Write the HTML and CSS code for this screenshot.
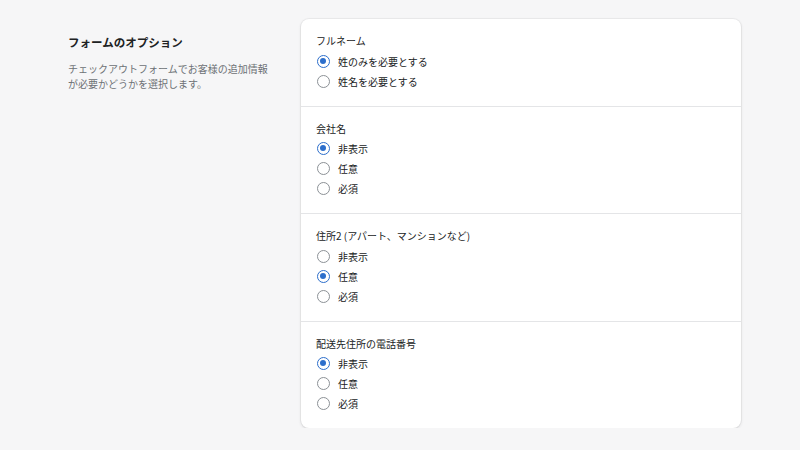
FILE: index.html
```html
<!DOCTYPE html>
<html lang="ja">
<head>
  <meta charset="UTF-8">
  <title>フォームのオプション</title>
  <link rel="stylesheet" href="styles.css">
</head>
<body>
  <div class="layout">
    <div class="intro">
      <h2 class="intro-title">フォームのオプション</h2>
      <p class="intro-text">チェックアウトフォームでお客様の追加情報が必要かどうかを選択します。</p>
    </div>

    <div class="card">
      <div class="section">
        <div class="section-label">フルネーム</div>
        <label class="option"><span class="radio checked"></span>姓のみを必要とする</label>
        <label class="option"><span class="radio"></span>姓名を必要とする</label>
      </div>

      <div class="section">
        <div class="section-label">会社名</div>
        <label class="option"><span class="radio checked"></span>非表示</label>
        <label class="option"><span class="radio"></span>任意</label>
        <label class="option"><span class="radio"></span>必須</label>
      </div>

      <div class="section">
        <div class="section-label">住所2 (アパート、マンションなど)</div>
        <label class="option"><span class="radio"></span>非表示</label>
        <label class="option"><span class="radio checked"></span>任意</label>
        <label class="option"><span class="radio"></span>必須</label>
      </div>

      <div class="section">
        <div class="section-label">配送先住所の電話番号</div>
        <label class="option"><span class="radio checked"></span>非表示</label>
        <label class="option"><span class="radio"></span>任意</label>
        <label class="option"><span class="radio"></span>必須</label>
      </div>
    </div>
  </div>
</body>
</html>
```

FILE: styles.css
```css
body {
  margin: 0;
  background-color: #f6f6f7;
  font-family: "Noto Sans CJK JP", "Noto Sans", sans-serif;
  color: #202223;
}

.layout {
  display: grid;
  grid-template-columns: 212px 440px;
  column-gap: 21px;
  padding: 19px 0 0 68px;
}

.intro {
  padding-top: 13px;
}

.intro-title {
  margin: 0;
  font-size: 11.5px;
  line-height: 20px;
  font-weight: bold;
}

.intro-text {
  width: 205px;
  margin: 10px 0 0;
  font-size: 10px;
  line-height: 14.5px;
  color: #6d7175;
}

.card {
  background: white;
  border-radius: 8px;
  box-shadow: 0 0 0 1px rgba(63,63,68,0.05), 0 1px 3px rgba(63,63,68,0.15);
  overflow: hidden;
}

.section {
  padding: 12px 16px 14.5px 15px;
  border-top: 1px solid #e4e5e7;
}

.section:first-child {
  border-top: none;
}

.section-label {
  font-size: 10px;
  line-height: 20px;
}

.option {
  display: flex;
  align-items: center;
  gap: 8px;
  height: 20px;
  font-size: 10px;
}

.radio {
  box-sizing: border-box;
  width: 13px;
  height: 13px;
  border: 1.5px solid #8c9196;
  border-radius: 50%;
  position: relative;
  margin-left: 1px;
}

.radio.checked {
  border-color: #2c6ecb;
}

.radio.checked::after {
  content: "";
  position: absolute;
  top: 2px;
  left: 2px;
  width: 6px;
  height: 6px;
  border-radius: 50%;
  background-color: #2c6ecb;
}
```
